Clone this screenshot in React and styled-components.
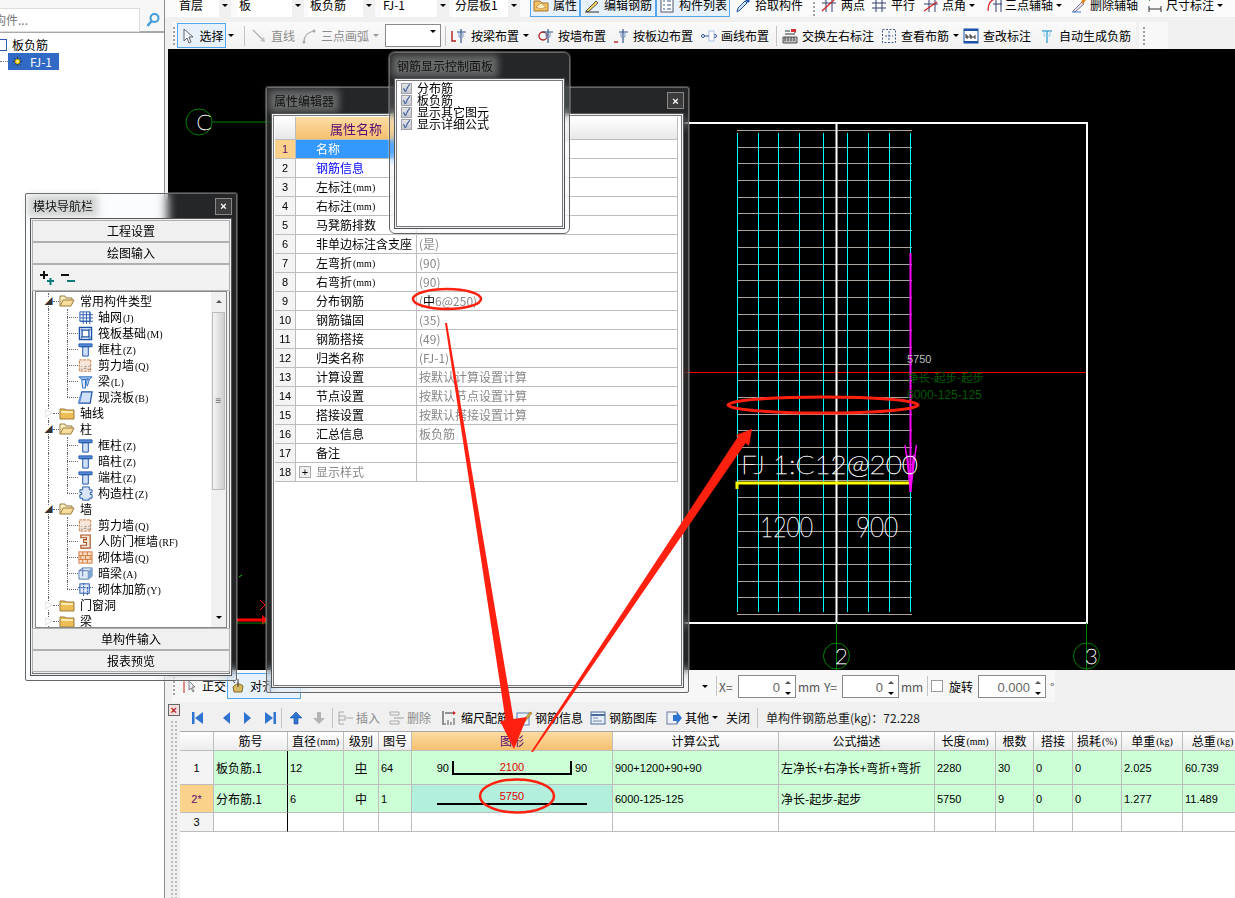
import React from "react";
import styled, { createGlobalStyle } from "styled-components";

const CJK = `"Noto Sans CJK SC", "Liberation Sans", sans-serif`;
const LATIN = `"Liberation Sans", "Noto Sans CJK SC", sans-serif`;

const GlobalStyle = createGlobalStyle`
  html, body { margin: 0; padding: 0; background: #f0f0f0; }
  body { font: 12px/1 ${CJK}; color: #000; }
`;

const Page = styled.div`
  display: flex;
  height: 898px;
  overflow: hidden;
  position: relative;
  width: 1235px;
`;

/* ---------- icons ---------- */

const Svg = ({ s = 16, children }) => (
  <svg width={s} height={s} viewBox="0 0 16 16" fill="none" style={{ flex: "none", display: "block" }}>
    {children}
  </svg>
);

const BLUE = "#1d52a8";
const icons = {
  attr: <><path d="M1 4h6l2 2h6v8H1z" fill="#f2c264" stroke="#a8742a" /><path d="M3 10l5-4 5 4-5 2z" fill="#fff2c8" stroke="#a8742a" strokeWidth=".6" /></>,
  edit: <><path d="M2 14L12 4l2 2L4 15z" fill="#f3d060" stroke="#333" strokeWidth=".8" /><path d="M1 15h14" stroke="#333" /></>,
  list: <><rect x="2" y="1" width="12" height="14" fill="#fff" stroke="#556" /><path d="M4 4h2M8 4h4M4 8h2M8 8h4M4 12h2M8 12h4" stroke="#35558a" /></>,
  pick: <><path d="M2 15l1-4 7-7 2 2-7 7z" fill="#cfe6fa" stroke={BLUE} /><path d="M10 3l2-2 3 3-2 2z" fill={BLUE} /></>,
  twopt: <><path d="M5 1v14M11 1v14M1 6h14" stroke="#35406e" /><path d="M1 14L14 2" stroke="#d82020" strokeWidth="1.2" /></>,
  parallel: <><path d="M5 1v14M11 1v14M1 6h14M1 11h14" stroke="#35406e" /></>,
  angle: <><path d="M6 1v14M12 1v14M1 7h14" stroke="#35406e" /><path d="M1 14L14 5" stroke="#d82020" strokeWidth="1.2" /></>,
  arc: <><path d="M2 14C2 7 5 3 9 2" stroke="#d82020" strokeWidth="1.2" /><path d="M10 1v14M15 1v14M7 7h9" stroke="#35406e" /></>,
  del: <><path d="M2 14l9-9 2 2-9 8z" fill="#e8d8f0" stroke="#555" strokeWidth=".7" /><path d="M10 5l3-4 2 2-3 4z" fill="#e08020" /><path d="M1 15h9" stroke="#3b78c8" /></>,
  dim: <><path d="M2 12h12M2 9v6M14 9v6" stroke="#333" /><path d="M2 3h1" stroke="#2a9a2a" strokeWidth="2" /></>,
  cursor: <path d="M5 1v12l3-3 2 5 2-1-2-5h4z" fill="#f4f8ff" stroke="#555" strokeWidth=".9" />,
  line: <><path d="M2 2l11 11" stroke="#a8a8a8" strokeWidth="1.2" /><path d="M14 14l-1-5-4 4z" fill="#c0c0c0" /></>,
  arc3: <><path d="M3 14C3 8 7 4 13 3" stroke="#a8a8a8" strokeWidth="1.2" /><circle cx="3" cy="14" r="1.5" fill="#a8a8a8" /><circle cx="13" cy="3" r="1.5" fill="#a8a8a8" /></>,
  beam: <><path d="M1 3v10h4" stroke="#b02020" strokeWidth="1.4" /><path d="M6 4h9M10 1v14" stroke="#35558a" strokeWidth="1.2" /><path d="M8 4v5h4V4" stroke="#7a9ac8" /></>,
  wall: <><circle cx="5" cy="8" r="4" stroke="#b02020" strokeWidth="1.3" /><path d="M5 4h10M10 1v14" stroke="#35558a" strokeWidth="1.2" /><path d="M8 4v5h4V4" stroke="#7a9ac8" /></>,
  edge: <><path d="M1 14h4" stroke="#b02020" strokeWidth="1.4" /><path d="M6 4h9M10 1v14" stroke="#35558a" strokeWidth="1.2" /><path d="M8 4v5h4V4" stroke="#7a9ac8" /></>,
  draw: <><path d="M1 8h14M10 3v10" stroke="#35558a" /><circle cx="2" cy="8" r="1.5" fill="#fff" stroke="#35558a" /><circle cx="14" cy="8" r="1.5" fill="#fff" stroke="#35558a" /><rect x="8" y="3" width="5" height="10" fill="#fff" stroke="#7a9ac8" strokeWidth=".6" /></>,
  swap: <><path d="M1 9h14v6H1z" fill="#bbb" stroke="#555" /><path d="M3 9v4M6 9v4M9 9v4M12 9v4" stroke="#444" /><path d="M3 3h5M3 6h10M13 1v4" stroke="#333" /><rect x="9" y="1" width="5" height="3" fill="#d83030" /></>,
  view: <><rect x="1.5" y="1.5" width="13" height="13" stroke="#3c5a90" strokeDasharray="2 1.5" /><path d="M8 3v10M4 8h8" stroke="#3c5a90" strokeDasharray="2 1.5" /></>,
  abc: <><rect x="1" y="1" width="14" height="14" fill="#fff" stroke="#1d52a8" /><path d="M1 2h14M1 14h14" stroke="#1d52a8" strokeWidth="2" /><path d="M3 6v4h2V8H3M7 6v4h2V8H7M13 8h-2v2h2" stroke="#000" strokeWidth=".8" /></>,
  auto: <><path d="M3 3h10M8 3v12" stroke="#4aa8d8" strokeWidth="1.5" /><path d="M5 3v5h6V3" stroke="#9ed0ea" /></>,
  ortho: <><rect x="0" y="2" width="2" height="13" fill="#e08a8a" /><path d="M6 3v9l2-2 2 4 1-1-2-4h3z" fill="#eef" stroke="#666" strokeWidth=".8" /></>,
  snap: <><path d="M3 9c3-4 7-4 10-1l-1 6H4z" fill="#d8b860" stroke="#856a28" /><path d="M8 1v8M5 5l-3-3" stroke="#333" /></>,
  first: <><rect x="2" y="2" width="2.5" height="12" fill="#2e74d0" /><path d="M13 2v12L5 8z" fill="#2e74d0" /></>,
  prev: <path d="M11 2v12L4 8z" fill="#2e74d0" />,
  next: <path d="M5 2v12l7-6z" fill="#2e74d0" />,
  last: <><rect x="11.5" y="2" width="2.5" height="12" fill="#2e74d0" /><path d="M3 2v12l8-6z" fill="#2e74d0" /></>,
  up: <path d="M8 2l6 6H10v6H6V8H2z" fill="#2e74d0" stroke="#1d52a8" strokeWidth=".6" />,
  down: <path d="M8 14l6-6H10V2H6v6H2z" fill="#b4b4b4" />,
  insert: <><path d="M1 2h5M1 14h5M1 2v4M1 10v4" stroke="#aaa" /><rect x="1" y="6" width="6" height="4" fill="#eee" stroke="#aaa" /><path d="M8 8h7" stroke="#aaa" /></>,
  remove: <><path d="M1 2h9v3H1zM1 11h9v3H1z" stroke="#aaa" /><path d="M5 8h10" stroke="#aaa" strokeWidth="1.2" /></>,
  scale: <><path d="M1 1v14" stroke="#333" /><path d="M3 13v2M6 10v5M9 12v3M12 8v7" stroke="#555" /><path d="M3 3h10" stroke="#333" /><path d="M14 3l-3-2v4z" fill="#d82020" /></>,
  info: <><rect x="1" y="3" width="12" height="12" fill="#eef4ff" stroke="#5a7ab0" /><path d="M6 12L14 2l2 1-8 10z" fill="#d8b040" stroke="#8a5020" strokeWidth=".6" /></>,
  lib: <><rect x="1" y="2" width="14" height="12" fill="#e6eefa" stroke="#4a6a9a" /><path d="M1 5h14" stroke="#4a6a9a" strokeWidth="2" /><path d="M3 8h5M3 11h9" stroke="#7a8ca8" /></>,
  other: <><rect x="1" y="2" width="10" height="12" fill="#eef2f8" stroke="#6a7a98" /><path d="M7 5h4V2l5 6-5 6v-3H7z" fill="#2e74d0" /></>,
  search: <><circle cx="9.5" cy="6" r="4" stroke="#3f9ade" strokeWidth="2" /><path d="M6.5 9l-4 5" stroke="#3f9ade" strokeWidth="2.4" /></>,
  gear: <><circle cx="8" cy="8" r="4" fill="#f5d000" stroke="#222" strokeWidth="1" strokeDasharray="2 1" /><circle cx="8" cy="8" r="1.6" fill="#fff" /><path d="M8 1v3M8 12v3M1 8h3M12 8h3M3 3l2 2M11 11l2 2M13 3l-2 2M5 11l-2 2" stroke="#222" /></>,
  folder: <><path d="M1 4h5l1 1h8v9H1z" fill="#eebd56" stroke="#9a7a3a" /><path d="M2 6h12v2H2z" fill="#fbe9b4" /></>,
  folderOpen: <><path d="M1 13V3h5l1 2h6v2" fill="#fdf0c8" stroke="#9a7a3a" /><path d="M1 13l3-6h11l-3 6z" fill="#f8dc9a" stroke="#9a7a3a" /></>,
  gridnet: <><path d="M2 2h11v10H2zM2 5h14M2 8.5h14M2 12h14M5.5 2v13M9 2v13M12.5 2v13" stroke="#2a5ab0" /></>,
  raft: <><rect x="1.5" y="1.5" width="13" height="13" fill="#dbe8fa" stroke="#1d52a8" strokeWidth="1.4" /><rect x="4.5" y="4.5" width="7" height="7" fill="#fff" stroke="#1d52a8" /><path d="M1 4h14M1 12h14M4 1v14M12 1v14" stroke="#1d52a8" strokeDasharray="1 1" /></>,
  column: <><path d="M1 2h14v3H1z" fill="#5b8fd8" stroke="#1d52a8" /><path d="M5 5h6v10H5z" fill="#cfe0f8" stroke="#1d52a8" /><path d="M3 5h10" stroke="#1d52a8" /></>,
  shear: <><rect x="1.5" y="2" width="12" height="12" fill="#f8e6d8" stroke="#c87840" strokeDasharray="3 1" /><path d="M3 12h2M6 11h3M3 9h1M7 9h2M10 12h3M11 9h2" stroke="#888" /></>,
  beamTree: <><path d="M1 3h14l-3 3H4z" fill="#9cc4ee" stroke="#2a6ac0" /><path d="M4 6h4v9H5zM10 5l2 1-2 7-1-3z" fill="#dceaf8" stroke="#2a6ac0" /></>,
  slab: <><path d="M4 2h11l-2 12H1z" fill="#cfe0f8" stroke="#1d52a8" strokeWidth="1.3" /><path d="M1 14L3 6" stroke="#5b8fd8" strokeWidth="2" /></>,
  gzz: <><path d="M5 1h7v3h3v3h-2v2h2v4h-3v2H5v-2H2V9h2V7H2V4h3z" fill="#d8e6f8" stroke="#1d52a8" /></>,
  door: <><path d="M3 1h10v14H3v-3h6V9H6V6h3V4H3z" fill="#f8e6d8" stroke="#a85020" strokeWidth="1.2" /></>,
  brick: <><rect x="1" y="2" width="14" height="12" fill="#fbdcc0" stroke="#d07840" /><path d="M1 6h14M1 10h14M5 2v4M10 2v4M3 6v4M8 6v4M13 6v4M5 10v4M10 10v4" stroke="#d07840" /></>,
  darkBeam: <><path d="M1 5l4-3h10v9l-4 3H1z" fill="#dceaf8" stroke="#5a7ab0" /><path d="M5 2v9M1 5h10v9" stroke="#5a7ab0" /><path d="M11 5l4-3v9l-4 3z" fill="#7ea4d0" /></>,
  rein: <><rect x="2" y="2" width="10" height="10" fill="#e4ecfa" stroke="#1d52a8" /><path d="M0 6h16M6 1v15M10 6v9" stroke="#1d52a8" strokeDasharray="2 1" /></>,
  expandAll: <><path d="M1 5h8M5 1v8" stroke="#111" strokeWidth="2" /><path d="M8 11h7M11.5 8v7" stroke="#0a7a7a" strokeWidth="2" /></>,
  collapseAll: <><path d="M1 5h8" stroke="#111" strokeWidth="2" /><path d="M7 11h8" stroke="#0a7a7a" strokeWidth="2" /></>,
};

const Icon = ({ n, s }) => <Svg s={s}>{icons[n]}</Svg>;

/* ---------- left panel ---------- */

const Left = styled.aside`
  background: #fff;
  border-right: 1px solid #8c8c8c;
  flex: none;
  width: 164px;
`;

const SearchBar = styled.div`
  align-items: center;
  background: #f7f7f7;
  border-bottom: 2px solid #a8a8a8;
  display: flex;
  height: 33px;
  padding-top: 9px;
  box-sizing: border-box;
`;

const SearchBox = styled.div`
  align-items: center;
  background: #fff;
  border: 1px solid #ddd;
  border-left: 0;
  color: #777;
  display: flex;
  height: 22px;
  overflow: hidden;
  width: 139px;
`;

const SearchHint = styled.span`
  margin-left: -6px;
`;

const SearchBtn = styled.div`
  margin-left: 5px;
`;

const ProjectTree = styled.div`
  padding-top: 3px;
`;

const ProjectRow = styled.div`
  align-items: center;
  display: flex;
  height: 17px;
`;

const RootBox = styled.span`
  border: 1px solid #2a5ab0;
  border-left: 0;
  height: 10px;
  margin-right: 5px;
  width: 6px;
`;

const DotLead = styled.span`
  border-top: 1px dotted #777;
  width: 8px;
`;

const Selected = styled.span`
  align-items: center;
  background: #316ac5;
  color: #fff;
  display: flex;
  gap: 7px;
  height: 17px;
  padding: 0 4px 0 4px;
  width: 51px;
  box-sizing: border-box;
`;

/* ---------- top toolbars ---------- */

const Main = styled.main`
  display: flex;
  flex: 1;
  flex-direction: column;
  min-width: 0;
`;

const TopRow = styled.div`
  align-items: flex-end;
  background: #fafafa;
  display: flex;
  flex: none;
  height: 17px;
  padding-left: 12px;
`;

const DrawRow = styled.div`
  background: #f0f0f0;
  display: flex;
  flex: none;
  height: 27px;
  margin-top: 5px;
  padding-left: 7px;
`;

const Strip = styled.div`
  align-items: center;
  background: linear-gradient(#fafafa, #f1f1f1);
  display: flex;
  flex: none;
  height: 100%;
`;

const StripEnd = styled.div`
  align-items: center;
  background: #f8f8f8;
  display: flex;
  flex: none;
  height: 100%;
  margin-left: 3px;
  padding-left: 3px;
  width: 26px;
`;

const Combo = styled.div`
  align-items: center;
  background: #fff;
  display: flex;
  flex: none;
  height: 24px;
  justify-content: space-between;
  margin-left: ${({ $ml }) => $ml || 0}px;
  padding-left: 2px;
  width: ${({ $w }) => $w}px;
  box-sizing: border-box;
`;

const ComboArrow = styled.span`
  align-items: center;
  align-self: stretch;
  background: #f0f0f0;
  display: flex;
  justify-content: center;
  width: 12px;
`;

const Caret = styled.i`
  border-left: 3px solid transparent;
  border-right: 3px solid transparent;
  border-top: 3px solid ${({ $off }) => ($off ? "#999" : "#000")};
  display: inline-block;
  flex: none;
  height: 0;
  width: 0;
`;

const Tool = styled.div`
  align-items: center;
  color: ${({ $off }) => ($off ? "#8c8c8c" : "#000")};
  display: flex;
  flex: none;
  gap: ${({ $gap }) => $gap ?? 4}px;
  height: ${({ $h }) => $h || 24}px;
  margin-left: ${({ $ml }) => $ml || 0}px;
  white-space: nowrap;
  width: ${({ $w }) => $w}px;
`;

const Toggle = styled(Tool)`
  background: #e6f1fb;
  border: 1px solid #55a5ea;
  box-sizing: border-box;
  justify-content: ${({ $start }) => ($start ? "flex-start" : "center")};
  padding-left: ${({ $start }) => ($start ? 2 : 0)}px;
`;

const Grip = styled.span`
  background: radial-gradient(circle, #a0a0a0 1px, transparent 1.2px) 0 0 / 4px 4px;
  flex: none;
  height: 20px;
  margin: ${({ $m }) => $m || "0"};
  width: 4px;
`;

const Sep = styled.span`
  background: #c4c4c4;
  flex: none;
  height: 20px;
  margin: ${({ $m }) => $m || "0"};
  width: 1px;
`;

const Field = styled.div`
  background: #fff;
  border: 1px solid #8a8a8a;
  box-sizing: border-box;
  flex: none;
  height: 23px;
  margin-left: ${({ $ml }) => $ml || 0}px;
  position: relative;
  width: ${({ $w }) => $w}px;
`;

const FieldValue = styled.span`
  color: #666;
  font: 13px ${LATIN};
  position: absolute;
  right: 15px;
  top: 4px;
`;

const Spin = styled.span`
  display: flex;
  flex-direction: column;
  gap: 8px;
  position: absolute;
  right: 4px;
  top: 5px;
`;

const SpinUp = styled(Caret)`
  border-bottom: 3px solid #555;
  border-top: 0;
`;

/* ---------- canvas ---------- */

const Canvas = styled.div`
  background: #000;
  flex: none;
  height: 621px;
  margin-left: 3px;
`;

/* ---------- bottom panel ---------- */

const SnapRow = styled.div`
  background: #f0f0f0;
  display: flex;
  flex: none;
  height: 32px;
  padding-left: 7px;
`;

const SnapStrip = styled.div`
  align-items: center;
  background: #f7f7f7;
  display: flex;
  height: 100%;
  width: 883px;
`;

const Label = styled.span`
  color: ${({ $c }) => $c || "#555"};
  flex: none;
  font: 12px ${CJK};
  margin-left: ${({ $ml }) => $ml || 0}px;
  width: ${({ $w }) => $w}px;
`;

const CheckBox = styled.span`
  background: #fff;
  border: 1px solid #999;
  flex: none;
  height: 10px;
  margin-left: 3px;
  width: 10px;
`;

const Panel = styled.section`
  display: flex;
  flex: 1;
  margin-top: 2px;
  min-height: 0;
`;

const Rail = styled.div`
  display: flex;
  flex: none;
  flex-direction: column;
  padding-left: 3px;
  width: 12px;
`;

const RailClose = styled.div`
  background: #f6dede;
  border: 1px solid #666;
  height: 10px;
  margin-bottom: 4px;
  position: relative;
  width: 10px;
  &::before {
    color: #b02020;
    content: "×";
    font: bold 11px/10px ${LATIN};
    left: 1.5px;
    position: absolute;
  }
`;

const RailDots = styled.div`
  background: radial-gradient(circle, #bdbdbd 1px, transparent 1.2px) 0 0 / 4px 4px;
  flex: 1;
  margin-left: 2px;
  width: 8px;
`;

const PanelBody = styled.div`
  display: flex;
  flex: 1;
  flex-direction: column;
  min-width: 0;
`;

const TableBar = styled.div`
  align-items: center;
  display: flex;
  flex: none;
  height: 27px;
  padding-left: 10px;
`;

const Summary = styled.span`
  color: #222;
  font: 12px ${CJK};
  margin-left: 8px;
  white-space: nowrap;
`;

const Sheet = styled.div`
  background: #fff;
  flex: 1;
  overflow: hidden;
`;

const Table = styled.div`
  border-top: 1px solid #a8a8a8;
  display: grid;
  grid-template-columns: 34px 74px 56px 35px 33px 201px 166px 156px 61px 38px 39px 49px 61px 60px;
  grid-template-rows: 19px 34px 28px 19px;
  width: 1063px;
`;

const Cell = styled.div`
  align-items: center;
  background: ${({ $bg }) => $bg || "#ccffd6"};
  border-bottom: 1px solid #bdbdbd;
  border-right: ${({ $freeze }) => ($freeze ? "1px solid #000" : "1px solid #bdbdbd")};
  box-sizing: border-box;
  display: flex;
  justify-content: ${({ $center }) => ($center ? "center" : "flex-start")};
  min-width: 0;
  padding-left: ${({ $center }) => ($center ? 0 : 2)}px;
  white-space: nowrap;
`;

const HeadCell = styled(Cell)`
  background: ${({ $on }) => ($on ? "linear-gradient(#fbdca2, #f5c070)" : "linear-gradient(#fff, #ececec)")};
  color: ${({ $on }) => ($on ? "#5a0a70" : "#000")};
  justify-content: center;
  padding: 0;
`;

const RowNo = styled(Cell)`
  background: ${({ $on }) => ($on ? "#fbd28c" : "#f4f4f4")};
  color: ${({ $on }) => ($on ? "#5a0a70" : "#000")};
  font: 11px ${LATIN};
  justify-content: center;
  padding: 0;
`;

const Num = styled.span`
  font: 11px ${LATIN};
`;

const Unit = styled.span`
  font: 10px "Liberation Serif", serif;
  margin-left: 1px;
`;

const Grade = styled.span`
  border-bottom: ${({ $bar }) => ($bar ? "1px solid #000" : "0")};
  line-height: 11px;
`;

const BentBar = styled.div`
  border: 2px solid #000;
  border-top: 0;
  box-sizing: border-box;
  color: #e00000;
  font: 11px/11px ${LATIN};
  height: 14px;
  margin: 0 3px;
  padding-top: 1px;
  text-align: center;
  width: 120px;
`;

const StraightBar = styled.div`
  border-bottom: 2px solid #000;
  color: #e00000;
  font: 11px/14px ${LATIN};
  margin-bottom: 4px;
  text-align: center;
  width: 150px;
`;

/* ---------- floating windows ---------- */

const GlassWindow = styled.div`
  backdrop-filter: blur(5px);
  background: rgba(225, 235, 245, 0.16);
  border: 1px solid #666;
  border-radius: ${({ $r }) => $r || 2}px;
  box-shadow: 0 0 0 1px rgba(255, 255, 255, 0.25);
  box-sizing: border-box;
  display: flex;
  flex-direction: column;
  height: ${({ $h }) => $h}px;
  left: ${({ $x }) => $x}px;
  padding: 0 4px 4px;
  position: absolute;
  top: ${({ $y }) => $y}px;
  width: ${({ $w }) => $w}px;
  z-index: ${({ $z }) => $z};
`;

const WinTitle = styled.div`
  align-items: center;
  color: #111;
  display: flex;
  flex: none;
  height: ${({ $h }) => $h}px;
  justify-content: space-between;
  padding-left: 3px;
`;

const WinLabel = styled.span`
  background: rgba(170, 170, 170, 0.5);
  box-shadow: 0 0 7px 5px rgba(170, 170, 170, 0.5);
`;

const WinClose = styled.div`
  align-items: center;
  background: #3c3c3c;
  border: 1px solid #888;
  color: #fff;
  display: flex;
  font: bold 11px ${LATIN};
  height: 15px;
  justify-content: center;
  width: 15px;
`;

const WinFrame = styled.div`
  background: ${({ $bg }) => $bg || "#fff"};
  border: 1px solid #555;
  box-shadow: inset 0 0 0 1px #eef2f6, inset 0 0 0 2px #777;
  display: flex;
  flex: 1;
  flex-direction: column;
  min-height: 0;
  padding: ${({ $p }) => $p ?? 3}px;
`;

/* rebar display panel */

const CheckRow = styled.label`
  align-items: center;
  display: flex;
  gap: 5px;
  height: 12px;
  line-height: 12px;
  padding-left: 3px;
`;

const Checked = styled.span`
  background: linear-gradient(#e4e4e4, #c4c8d0);
  border: 1px solid #a0a0a8;
  color: #3c5aa0;
  display: block;
  flex: none;
  font: bold 10px/10px ${LATIN};
  height: 9px;
  text-align: center;
  width: 9px;
`;

/* property grid */

const PropGrid = styled.div`
  display: grid;
  grid-auto-rows: 19px;
  grid-template-columns: 21px 121px 261px;
  grid-template-rows: 23px;
`;

const PropHead = styled.div`
  align-items: center;
  background: ${({ $on }) => ($on ? "linear-gradient(#fbdca2, #f5c070)" : "linear-gradient(#fff, #e8e8e8)")};
  border-bottom: 1px solid #bdbdbd;
  border-right: 1px solid #bdbdbd;
  color: #5a0a70;
  display: flex;
  font-size: 13px;
  justify-content: center;
`;

const PropNo = styled.div`
  align-items: center;
  background: ${({ $on }) => ($on ? "#fbd28c" : "#f4f4f4")};
  border-bottom: 1px solid #bdbdbd;
  border-right: 1px solid #bdbdbd;
  color: ${({ $on }) => ($on ? "#5a0a70" : "#000")};
  display: flex;
  font: 11px ${LATIN};
  justify-content: center;
`;

const PropName = styled.div`
  align-items: center;
  background: ${({ $on }) => ($on ? "#3399ff" : "#fff")};
  border-bottom: 1px solid #bdbdbd;
  border-right: 1px solid #bdbdbd;
  color: ${({ $on, $c }) => ($on ? "#fff" : $c || "#000")};
  display: flex;
  padding-left: ${({ $plus }) => ($plus ? 3 : 20)}px;
  white-space: nowrap;
`;

const PropValue = styled.div`
  align-items: center;
  background: #fff;
  border-bottom: 1px solid #bdbdbd;
  border-right: 1px solid #bdbdbd;
  color: #888;
  display: flex;
  padding-left: 2px;
`;

const PropMark = styled.span`
  color: #000;
`;

const PlusBox = styled.span`
  background: #eee;
  border: 1px solid #aaa;
  color: #000;
  font: 11px/10px ${LATIN};
  height: 10px;
  margin-right: 5px;
  text-align: center;
  width: 10px;
`;

/* module navigator */

const NavButton = styled.div`
  align-items: center;
  background: #f0f0f0;
  border: 1px solid #b0b0b0;
  box-sizing: border-box;
  display: flex;
  flex: none;
  height: 22px;
  justify-content: center;
`;

const NavTools = styled.div`
  align-items: center;
  background: #f2f2f2;
  border: 1px solid #b0b0b0;
  box-sizing: border-box;
  display: flex;
  flex: none;
  gap: 5px;
  height: 27px;
  padding-left: 6px;
`;

const NavBody = styled.div`
  border: 1px solid #888;
  display: flex;
  flex: none;
  height: 335px;
  margin: 0 3px;
`;

const Tree = styled.div`
  background: #fff;
  flex: 1;
  overflow: hidden;
  padding-top: 1px;
`;

const TreeRow = styled.div`
  align-items: center;
  display: flex;
  height: 16px;
  position: relative;
  white-space: nowrap;
`;

const Guide = styled.span`
  border-left: 1px dotted #666;
  height: ${({ $half }) => ($half ? "8px" : "16px")};
  left: ${({ $x }) => $x}px;
  position: absolute;
  top: 0;
`;

const Lead = styled.span`
  border-top: 1px dotted #666;
  left: ${({ $x }) => $x}px;
  position: absolute;
  top: 8px;
  width: ${({ $w }) => $w}px;
`;

const Expander = styled.span`
  background: #fff;
  flex: none;
  font: 8px/9px ${LATIN};
  color: ${({ $open }) => ($open ? "#333" : "#aaa")};
  height: 9px;
  margin-left: 8px;
  position: relative;
  text-align: center;
  width: 9px;
`;

const TreeIcon = styled.span`
  flex: none;
  margin-left: ${({ $ml }) => $ml}px;
  position: relative;
`;

const TreeText = styled.span`
  margin-left: ${({ $ml }) => $ml}px;
`;

const Scroll = styled.div`
  background: #f0f0f0;
  display: flex;
  flex: none;
  flex-direction: column;
  width: 15px;
`;

const ScrollBtn = styled.div`
  align-items: center;
  display: flex;
  flex: none;
  height: 19px;
  justify-content: center;
`;

const ScrollThumb = styled.div`
  align-items: center;
  background: linear-gradient(90deg, #f4f4f4, #cfcfcf);
  border: 1px solid #bbb;
  box-sizing: border-box;
  color: #666;
  display: flex;
  flex: none;
  font: 10px/8px ${LATIN};
  height: 178px;
  justify-content: center;
  margin: 1px 1px 0;
`;

const ScrollRest = styled.div`
  flex: 1;
`;

const Overlay = styled.svg`
  left: 0;
  pointer-events: none;
  position: absolute;
  top: 0;
  z-index: 50;
`;

/* ---------- data ---------- */

const props = [
  ["名称", ""], ["钢筋信息", ""], ["左标注", "", "(mm)"], ["右标注", "", "(mm)"], ["马凳筋排数", ""],
  ["非单边标注含支座", "(是)"], ["左弯折", "(90)", "(mm)"], ["右弯折", "(90)", "(mm)"],
  ["分布钢筋", <>(<PropMark>中</PropMark>6@250)</>], ["钢筋锚固", "(35)"], ["钢筋搭接", "(49)"], ["归类名称", "(FJ-1)"],
  ["计算设置", "按默认计算设置计算"], ["节点设置", "按默认节点设置计算"], ["搭接设置", "按默认搭接设置计算"],
  ["汇总信息", "板负筋"], ["备注", ""], ["显示样式", ""],
];

const tree = [
  { root: "常用构件类型", open: true },
  { t: "轴网", k: "(J)", i: "gridnet" }, { t: "筏板基础", k: "(M)", i: "raft" }, { t: "框柱", k: "(Z)", i: "column" },
  { t: "剪力墙", k: "(Q)", i: "shear" }, { t: "梁", k: "(L)", i: "beamTree" }, { t: "现浇板", k: "(B)", i: "slab", last: true },
  { root: "轴线" },
  { root: "柱", open: true },
  { t: "框柱", k: "(Z)", i: "column" }, { t: "暗柱", k: "(Z)", i: "column" }, { t: "端柱", k: "(Z)", i: "column" },
  { t: "构造柱", k: "(Z)", i: "gzz", last: true },
  { root: "墙", open: true },
  { t: "剪力墙", k: "(Q)", i: "shear" }, { t: "人防门框墙", k: "(RF)", i: "door" }, { t: "砌体墙", k: "(Q)", i: "brick" },
  { t: "暗梁", k: "(A)", i: "darkBeam" }, { t: "砌体加筋", k: "(Y)", i: "rein", last: true },
  { root: "门窗洞" },
  { root: "梁" },
];

const heads = ["", "筋号", "直径", "级别", "图号", "图形", "计算公式", "公式描述", "长度", "根数", "搭接", "损耗", "单重", "总重"];
const units = { 直径: "(mm)", 长度: "(mm)", 损耗: "(%)", 单重: "(kg)", 总重: "(kg)" };

const cyan = [737, 758, 778, 799, 823, 847, 868, 889, 910];
const grey = Array.from({ length: 30 }, (_, i) => Math.round(130 + i * 16.69) + 0.5);

const CAD = { fontFamily: '"Lato", "Liberation Sans", sans-serif', fontWeight: 100, fill: "#fff", stroke: "#fff", strokeWidth: 0.45 };

const Axis = ({ cx, cy, label }) => (
  <g>
    <circle cx={cx} cy={cy} r="13" stroke="#008000" fill="none" />
    <text x={cx + 5} y={cy + 8} textAnchor="middle" fontSize="22" style={CAD}>{label}</text>
  </g>
);

const Drawing = () => (
  <svg width="1067" height="621" viewBox="168 49 1067 621" style={{ display: "block" }}>
    <rect x="340" y="123" width="747" height="500" fill="none" stroke="#fff" strokeWidth="2" />
    <path d="M340 372.5H1086" stroke="#f00" />
    {grey.map((y) => <path key={y} d={`M737 ${y}H912`} stroke="#aca39c" />)}
    {cyan.map((x) => <path key={x} d={`M${x + 0.5} 133V612`} stroke="#0ff" />)}
    <path d="M836.5 123V623" stroke="#fff" strokeWidth="2" />
    <path d="M737 489v-6H910" stroke="#ff0" strokeWidth="3" fill="none" />
    <path d="M910.5 253V492" stroke="#f0f" strokeWidth="2" />
    <path d="M905 445l2 14 3.5 33M916.5 445l-2 14-4 33M907.5 455l3 37M913.5 455l-3 37" stroke="#f0f" strokeWidth="1.5" fill="none" />
    <text x="741" y="474" fontSize="26" textLength="177" lengthAdjust="spacingAndGlyphs" style={CAD}>FJ 1:C12@200</text>
    <text x="760" y="537" fontSize="27" textLength="53" lengthAdjust="spacingAndGlyphs" style={CAD}>1200</text>
    <text x="856" y="537" fontSize="27" textLength="42" lengthAdjust="spacingAndGlyphs" style={CAD}>900</text>
    <text x="907" y="363" fontSize="11" fill="#bdbdbd" fontFamily={LATIN}>5750</text>
    <text x="907" y="382" fontSize="11.5" fill="#005a00" fontFamily={CJK}>净长-起步-起步</text>
    <text x="907" y="399" fontSize="12" fill="#005a00" fontFamily={LATIN}>6000-125-125</text>
    <path d="M212 122H340M836.5 623V670M1086.5 623V670" stroke="#008000" />
    <Axis cx={199} cy={122} label="C" />
    <Axis cx={836.5} cy={656} label="2" />
    <Axis cx={1086.5} cy={656} label="3" />
    <path d="M237 620H262" stroke="#f00" strokeWidth="3" />
    <path d="M262 615l6 5-6 5z" fill="#f00" />
    <path d="M237 623H268" stroke="#008000" />
    <path d="M260 600l5 5-5 5" stroke="#f00" fill="none" />
    <path d="M239 577l3-2" stroke="#0c0" />
  </svg>
);

/* ---------- parts ---------- */

const ComboBox = ({ w, ml, children }) => (
  <Combo $w={w} $ml={ml}>
    <span>{children}</span>
    <ComboArrow><Caret /></ComboArrow>
  </Combo>
);

const Item = ({ i, w, ml, off, caret, gap, h, children }) => (
  <Tool $w={w} $ml={ml} $off={off} $gap={gap} $h={h}>
    {i && <Icon n={i} />}
    <span>{children}</span>
    {caret && <Caret $off={off} />}
  </Tool>
);

const Spinner = ({ w, ml, value }) => (
  <Field $w={w} $ml={ml}>
    <FieldValue>{value}</FieldValue>
    <Spin><SpinUp /><Caret /></Spin>
  </Field>
);

const NavTree = () => (
  <Tree>
    {tree.map((n, idx) =>
      n.root ? (
        <TreeRow key={idx}>
          <Guide $x={12} />
          <Lead $x={17} $w={6} />
          <Expander $open={n.open}>{n.open ? "◢" : "▷"}</Expander>
          <TreeIcon $ml={6}><Icon n={n.open ? "folderOpen" : "folder"} /></TreeIcon>
          <TreeText $ml={5}>{n.root}</TreeText>
        </TreeRow>
      ) : (
        <TreeRow key={idx}>
          <Guide $x={12} />
          <Guide $x={31} $half={n.last} />
          <Lead $x={31} $w={11} />
          <TreeIcon $ml={42}><Icon n={n.i} s={15} /></TreeIcon>
          <TreeText $ml={5}>{n.t}<Unit>{n.k}</Unit></TreeText>
        </TreeRow>
      )
    )}
  </Tree>
);

export default function App() {
  return (
    <Page>
      <GlobalStyle />

      <Left>
        <SearchBar>
          <SearchBox><SearchHint>构件...</SearchHint></SearchBox>
          <SearchBtn><Icon n="search" /></SearchBtn>
        </SearchBar>
        <ProjectTree>
          <ProjectRow><RootBox />板负筋</ProjectRow>
          <ProjectRow>
            <DotLead />
            <Selected><Icon n="gear" s={11} />FJ-1</Selected>
          </ProjectRow>
        </ProjectTree>
      </Left>

      <Main>
        <TopRow>
          <ComboBox w={54}>首层</ComboBox>
          <ComboBox w={67} ml={6}>板</ComboBox>
          <ComboBox w={67} ml={4}>板负筋</ComboBox>
          <ComboBox w={68} ml={6}>FJ-1</ComboBox>
          <ComboBox w={67} ml={4}>分层板1</ComboBox>
          <Toggle $w={50} $ml={10}><Icon n="attr" />属性</Toggle>
          <Toggle $w={76}><Icon n="edit" />编辑钢筋</Toggle>
          <Toggle $w={74}><Icon n="list" />构件列表</Toggle>
          <Item i="pick" w={73} ml={5}>拾取构件</Item>
          <Grip $m="0 5px 0 4px" />
          <Item i="twopt" w={50}>两点</Item>
          <Item i="parallel" w={52}>平行</Item>
          <Item i="angle" w={63} caret gap={3}>点角</Item>
          <Item i="arc" w={85} caret gap={3}>三点辅轴</Item>
          <Item i="del" w={76} gap={3}>删除辅轴</Item>
          <Item i="dim" w={85} caret gap={3}>尺寸标注</Item>
        </TopRow>

        <DrawRow>
          <Strip>
            <Grip />
            <Toggle $w={49} $h={25} $ml={1}><Icon n="cursor" />选择</Toggle>
            <Tool $w={10} $ml={2}><Caret /></Tool>
            <Sep $m="0 6px" />
            <Item i="line" w={50} off>直线</Item>
            <Item i="arc3" w={84} off caret>三点画弧</Item>
            <Field $w={56}><Spin><Caret /></Spin></Field>
            <Sep $m="0 5px 0 4px" />
            <Item i="beam" w={87} caret>按梁布置</Item>
            <Item i="wall" w={75}>按墙布置</Item>
            <Item i="edge" w={88}>按板边布置</Item>
            <Item i="draw" w={75}>画线布置</Item>
            <Sep $m="0 5px 0 0" />
            <Item i="swap" w={99}>交换左右标注</Item>
            <Item i="view" w={82} caret>查看布筋</Item>
            <Item i="abc" w={76}>查改标注</Item>
            <Item i="auto" w={97}>自动生成负筋</Item>
          </Strip>
          <StripEnd><Grip /></StripEnd>
        </DrawRow>

        <Canvas><Drawing /></Canvas>

        <SnapRow>
          <SnapStrip>
            <Grip $m="0 7px 0 0" />
            <Item i="ortho" w={44} gap={3}>正交</Item>
            <Toggle $w={74} $h={26} $gap={4} $start><Icon n="snap" />对齐</Toggle>
            <Tool $w={401} />
            <Caret />
            <Sep $m="0 2px 0 8px" />
            <Label $w={19}>X=</Label>
            <Spinner w={58} value="0" />
            <Label $w={26} $ml={2}>mm</Label>
            <Label $w={18}>Y=</Label>
            <Spinner w={57} value="0" />
            <Label $w={26} $ml={2}>mm</Label>
            <Sep />
            <CheckBox />
            <Label $w={29} $ml={6} $c="#000">旋转</Label>
            <Spinner w={68} value="0.000" />
            <Label $w={8} $ml={4}>°</Label>
          </SnapStrip>
        </SnapRow>

        <Panel>
          <Rail>
            <RailClose />
            <RailDots />
          </Rail>
          <PanelBody>
            <TableBar>
              <Item i="first" w={29} />
              <Item i="prev" w={20} />
              <Item i="next" w={23} />
              <Item i="last" w={19} />
              <Sep />
              <Item i="up" w={23} ml={6} />
              <Item i="down" w={21} />
              <Sep $m="0 5px 0 0" />
              <Item i="insert" w={51} off gap={2}>插入</Item>
              <Item i="remove" w={53} off gap={2}>删除</Item>
              <Item i="scale" w={74} gap={3}>缩尺配筋</Item>
              <Item i="info" w={74} gap={3}>钢筋信息</Item>
              <Item i="lib" w={76} gap={3}>钢筋图库</Item>
              <Item i="other" w={60} gap={3} caret>其他</Item>
              <Item w={31}>关闭</Item>
              <Sep />
              <Summary>单构件钢筋总重(kg)：72.228</Summary>
            </TableBar>
            <Sheet>
              <Table>
                {heads.map((h) => (
                  <HeadCell key={h} $on={h === "图形"}>
                    {h}{units[h] && <Unit>{units[h]}</Unit>}
                  </HeadCell>
                ))}

                <RowNo>1</RowNo>
                <Cell $freeze>板负筋.1</Cell>
                <Cell><Num>12</Num></Cell>
                <Cell $center><Grade $bar>中</Grade></Cell>
                <Cell><Num>64</Num></Cell>
                <Cell $center><Num>90</Num><BentBar>2100</BentBar><Num>90</Num></Cell>
                <Cell><Num>900+1200+90+90</Num></Cell>
                <Cell>左净长+右净长+弯折+弯折</Cell>
                <Cell><Num>2280</Num></Cell>
                <Cell><Num>30</Num></Cell>
                <Cell><Num>0</Num></Cell>
                <Cell><Num>0</Num></Cell>
                <Cell><Num>2.025</Num></Cell>
                <Cell><Num>60.739</Num></Cell>

                <RowNo $on>2*</RowNo>
                <Cell $freeze>分布筋.1</Cell>
                <Cell><Num>6</Num></Cell>
                <Cell $center><Grade>中</Grade></Cell>
                <Cell><Num>1</Num></Cell>
                <Cell $center $bg="#b2f0dd"><StraightBar>5750</StraightBar></Cell>
                <Cell><Num>6000-125-125</Num></Cell>
                <Cell>净长-起步-起步</Cell>
                <Cell><Num>5750</Num></Cell>
                <Cell><Num>9</Num></Cell>
                <Cell><Num>0</Num></Cell>
                <Cell><Num>0</Num></Cell>
                <Cell><Num>1.277</Num></Cell>
                <Cell><Num>11.489</Num></Cell>

                <RowNo>3</RowNo>
                <Cell $bg="#fff" $freeze />
                {Array.from({ length: 12 }, (_, i) => <Cell key={i} $bg="#fff" />)}
              </Table>
            </Sheet>
          </PanelBody>
        </Panel>
      </Main>

      <GlassWindow $x={25} $y={193} $w={212} $h={488} $z={10}>
        <WinTitle $h={24}><WinLabel>模块导航栏</WinLabel><WinClose>×</WinClose></WinTitle>
        <WinFrame $bg="#f0f0f0" $p={1}>
          <NavButton>工程设置</NavButton>
          <NavButton>绘图输入</NavButton>
          <NavTools><Icon n="expandAll" /><Icon n="collapseAll" /></NavTools>
          <NavBody>
            <NavTree />
            <Scroll>
              <ScrollBtn><SpinUp /></ScrollBtn>
              <ScrollThumb>≡</ScrollThumb>
              <ScrollRest />
              <ScrollBtn><Caret /></ScrollBtn>
            </Scroll>
          </NavBody>
          <NavButton>单构件输入</NavButton>
          <NavButton>报表预览</NavButton>
        </WinFrame>
      </GlassWindow>

      <GlassWindow $x={266} $y={87} $w={423} $h={606} $z={11}>
        <WinTitle $h={25}><WinLabel>属性编辑器</WinLabel><WinClose>×</WinClose></WinTitle>
        <WinFrame>
          <PropGrid>
            <PropHead />
            <PropHead $on>属性名称</PropHead>
            <PropHead />
            {props.map(([name, value, unit], i) => (
              <React.Fragment key={name}>
                <PropNo $on={i === 0}>{i + 1}</PropNo>
                <PropName $on={i === 0} $plus={i === 17} $c={i === 1 ? "#0000ff" : i === 17 ? "#888" : undefined}>
                  {i === 17 && <PlusBox>+</PlusBox>}
                  {name}{unit && <Unit>{unit}</Unit>}
                </PropName>
                <PropValue>{value}</PropValue>
              </React.Fragment>
            ))}
          </PropGrid>
        </WinFrame>
      </GlassWindow>

      <GlassWindow $x={389} $y={52} $w={181} $h={182} $z={12} $r={6}>
        <WinTitle $h={25}><WinLabel>钢筋显示控制面板</WinLabel></WinTitle>
        <WinFrame>
          {["分布筋", "板负筋", "显示其它图元", "显示详细公式"].map((t) => (
            <CheckRow key={t}><Checked>✓</Checked>{t}</CheckRow>
          ))}
        </WinFrame>
      </GlassWindow>

      <Overlay width="1235" height="898" viewBox="0 0 1235 898" fill="none">
        <ellipse cx="447" cy="299" rx="34" ry="10" stroke="#ff2010" strokeWidth="2.5" />
        <ellipse cx="823" cy="405" rx="95" ry="8" stroke="#ff2010" strokeWidth="3" />
        <ellipse cx="517" cy="796" rx="37" ry="16.5" stroke="#ff2010" strokeWidth="2.5" />
        <path d="M445 323L447 323L514 722L506 723Z" fill="#ff2010" />
        <path d="M500 721L527 717L514 749Z" fill="#ff2010" />
        <path d="M531 752L533 752L747 441L739 435Z" fill="#ff2010" />
        <path d="M752 429L736 435L749 446Z" fill="#ff2010" />
      </Overlay>
    </Page>
  );
}
